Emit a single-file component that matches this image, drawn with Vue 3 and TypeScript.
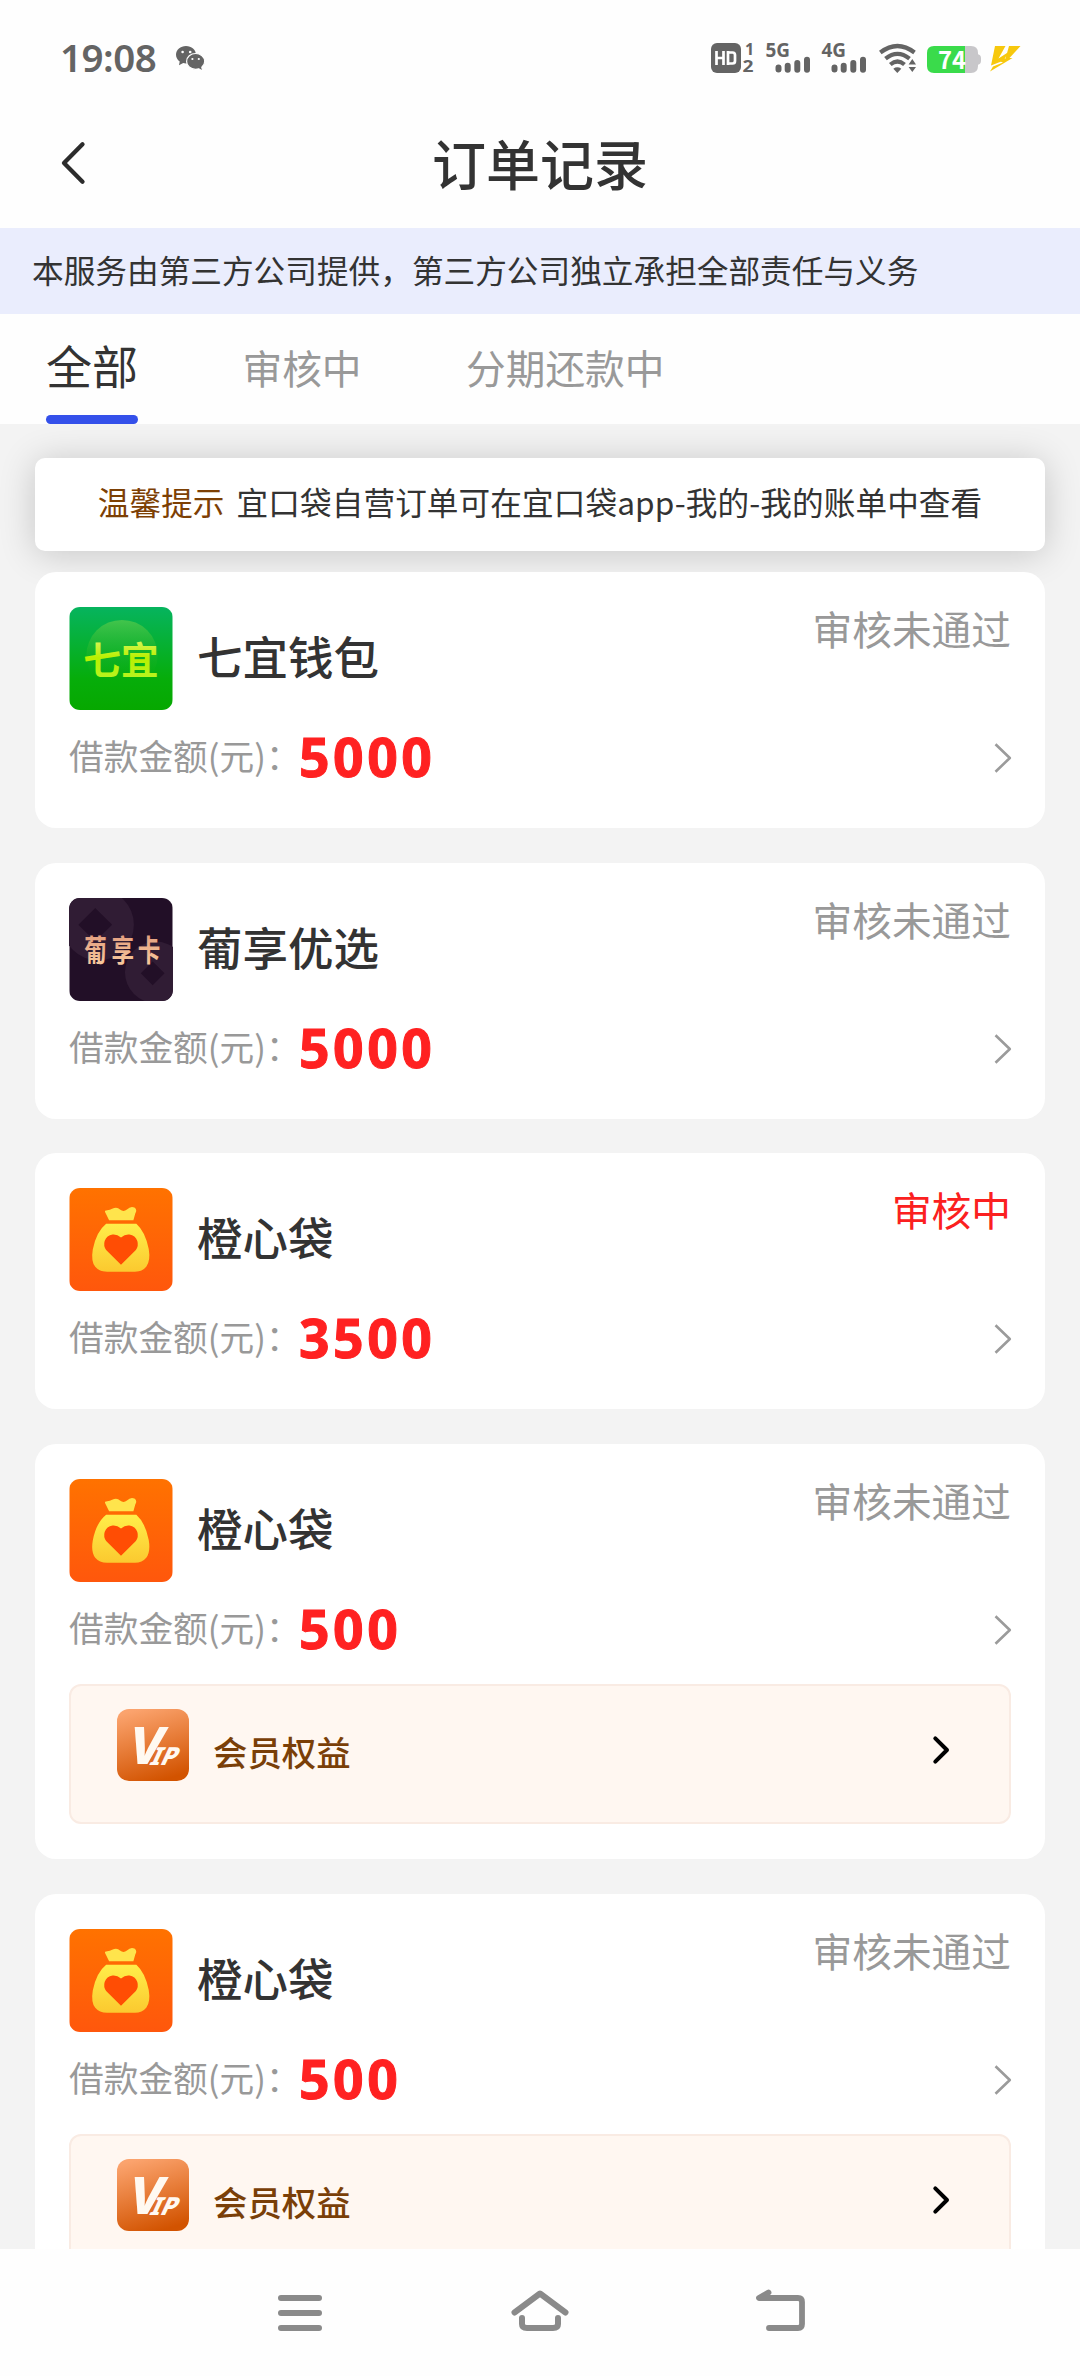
<script setup lang="ts">
type Logo = 'qiyi' | 'puxiang' | 'chengxin'

interface Order {
  id: number
  logo: Logo
  name: string
  amount: string
  status: string
  pending?: boolean
  vip?: boolean
}

const tabs = ['全部', '审核中', '分期还款中']
const active = 0

const orders: Order[] = [
  { id: 1, logo: 'qiyi', name: '七宜钱包', amount: '5000', status: '审核未通过' },
  { id: 2, logo: 'puxiang', name: '葡享优选', amount: '5000', status: '审核未通过' },
  { id: 3, logo: 'chengxin', name: '橙心袋', amount: '3500', status: '审核中', pending: true },
  { id: 4, logo: 'chengxin', name: '橙心袋', amount: '500', status: '审核未通过', vip: true },
  { id: 5, logo: 'chengxin', name: '橙心袋', amount: '500', status: '审核未通过', vip: true },
]
</script>

<template>
  <div class="screen">
    <div class="statusbar">
      <span class="clock">19:08</span>
      <svg class="wechat" width="30" height="26" viewBox="0 0 30 26">
        <path fill="#646464" d="M10 0C4.500 0 0 3.800 0 8.700c0 2.800 1.500 5.200 3.700 6.800L3 19.300l4.200-2.200c.9.2 1.800.3 2.800.3 5.500 0 10-3.900 10-8.700S15.500 0 10 0Z" />
        <path fill="#646464" stroke="#fff" stroke-width="1.200" d="M19.600 7.500c-5 0-9 3.500-9 7.900s4 7.900 9 7.900c1.200 0 2.300-.2 3.300-.5l3.800 2.400-.9-4c1.800-1.500 2.900-3.500 2.900-5.800 0-4.400-4.100-7.900-9.100-7.900Z" />
        <g fill="#fff"><circle cx="6.600" cy="6" r="1.300" /><circle cx="14.200" cy="6" r="1.300" /><circle cx="16.400" cy="13" r="1.100" /><circle cx="22.800" cy="13" r="1.100" /></g>
      </svg>
      <div class="indicators">
        <svg width="42" height="30" viewBox="0 0 42 30">
          <rect width="30" height="30" rx="6" fill="#646464" />
          <path d="M5.500 8v14M12.500 8v14M5.500 15h7M17 9.500h4.500q2.500 0 2.500 2.500v6q0 2.500-2.500 2.500H17ZM17 8v14" fill="none" stroke="#fff" stroke-width="2.700" />
          <text class="tiny" x="34" y="12" font-size="16">1</text>
          <text class="tiny" x="31.500" y="29.300" font-size="16" textLength="11" lengthAdjust="spacingAndGlyphs">2</text>
        </svg>
        <svg v-for="g in ['5G', '4G']" :key="g" class="signal" width="44" height="30" viewBox="0 0 44 30">
          <text class="tiny" x="-.5" y="14" font-size="19" textLength="24.500" lengthAdjust="spacingAndGlyphs">{{ g }}</text>
          <path d="M12.500 24.500v2M21.700 22.700v4M31.300 20v6.700M41 16.800v9.900" fill="none" stroke="#646464" stroke-width="6" stroke-linecap="round" />
        </svg>
        <svg class="wifi" width="37" height="30" viewBox="0 0 37 30">
          <g fill="none" stroke="#646464" stroke-width="4.200">
            <path d="M1.300 9.500Q18.500-3.500 35.500 9.500" />
            <path d="M6.500 15.600Q18.500 6 30.500 15.600" />
            <path d="M11.300 21.500Q18.500 15.500 25.500 21.500" />
          </g>
          <path d="M14.300 25.700Q18.300 23 22.300 25.700L18.300 30Z" fill="#646464" />
          <path d="M33.300 16l3.700 5.400h-7.400ZM33.300 29l3.700-5h-7.400Z" fill="#646464" />
        </svg>
        <svg class="battery" width="54" height="27" viewBox="0 0 54 27">
          <path d="M38 0h6q7 0 7 7v13q0 7-7 7h-6Z" fill="#c8c7ca" />
          <path d="M50 8q4 .5 4 4v3q0 3.500-4 4Z" fill="#c8c7ca" />
          <path d="M7 0h31v27H7q-7 0-7-7V7q0-7 7-7Z" fill="#3adb4b" />
          <text x="11" y="22.500" font-size="24" font-weight="700" fill="#fff" textLength="28" lengthAdjust="spacingAndGlyphs">74</text>
        </svg>
        <svg class="bolt" width="30" height="26" viewBox="0 0 30 26">
          <path fill="#f7c80d" d="M5 0h10.500L8.500 12.500l10-6.500L14.500 13l4.500-.5L1 19.500ZM19 0H30.500L19.500 12h3L0 25.500l3-5 10-4-4-1.500 6.500-2.500Z" />
        </svg>
      </div>
    </div>

    <header class="header">
      <svg class="back" width="24" height="42" viewBox="0 0 24 42">
        <path d="M21.500 2.300 3 21l18.500 18.700" fill="none" stroke="#2c2c2c" stroke-width="4.300" stroke-linecap="round" stroke-linejoin="round" />
      </svg>
      <h1>订单记录</h1>
    </header>

    <div class="notice">本服务由第三方公司提供，第三方公司独立承担全部责任与义务</div>

    <nav class="tabs">
      <span v-for="(t, i) in tabs" :key="t" class="tab" :class="{ active: i === active }">{{ t }}</span>
    </nav>

    <main class="list">
      <div class="tip"><b>温馨提示</b><span>宜口袋自营订单可在宜口袋app-我的-我的账单中查看</span></div>

      <section v-for="o in orders" :key="o.id" class="card">
        <div class="head">
          <svg v-if="o.logo === 'qiyi'" class="logo" viewBox="0 0 104 104">
            <defs>
              <linearGradient id="qy-bg" x1="0" y1="0" x2="0" y2="1"><stop offset="0" stop-color="#06b45e" /><stop offset=".7" stop-color="#06ad0a" /><stop offset="1" stop-color="#06a800" /></linearGradient>
              <linearGradient id="qy-disc" x1="0" y1="0" x2="0" y2="1"><stop offset="0" stop-color="#43c44c" /><stop offset=".85" stop-color="#0cab10" stop-opacity="0" /></linearGradient>
              <linearGradient id="qy-text" x1="0" y1="0" x2="0" y2="1"><stop offset="0" stop-color="#eaf78a" /><stop offset=".5" stop-color="#b9f000" /><stop offset="1" stop-color="#b6f52a" /></linearGradient>
            </defs>
            <rect width="104" height="104" fill="url(#qy-bg)" />
            <circle cx="53" cy="49" r="36" fill="url(#qy-disc)" />
            <text x="14" y="68" font-size="38" font-weight="700" fill="url(#qy-text)" textLength="76">七宜</text>
          </svg>
          <svg v-else-if="o.logo === 'puxiang'" class="logo" viewBox="0 0 104 104">
            <defs>
              <linearGradient id="px-text" x1="0" y1="0" x2="0" y2="1"><stop offset="0" stop-color="#dd9378" /><stop offset="1" stop-color="#fbd0a2" /></linearGradient>
            </defs>
            <rect width="104" height="104" fill="#220f27" />
            <circle cx="29" cy="27" r="36" fill="#301c34" />
            <circle cx="87" cy="75" r="31" fill="#301c34" />
            <path d="M26 10 43 27 26 44 9 27ZM84 64 96 76 84 88 72 76Z" fill="#220f27" />
            <text transform="translate(15 63.500) scale(.76 1)" x="0 36 71" y="0" font-size="30" font-weight="700" fill="url(#px-text)">葡享卡</text>
          </svg>
          <svg v-else class="logo" viewBox="0 0 104 104">
            <defs>
              <linearGradient id="cx-bg" x1="0" y1="0" x2="0" y2="1"><stop offset="0" stop-color="#ff7200" /><stop offset="1" stop-color="#ff570c" /></linearGradient>
              <linearGradient id="cx-bag" x1="0" y1="0" x2="0" y2="1"><stop offset="0" stop-color="#ffee4a" /><stop offset="1" stop-color="#fbc92f" /></linearGradient>
            </defs>
            <rect width="104" height="104" fill="url(#cx-bg)" />
            <path d="M40 32.500 36 24.500q-1-2 2-2 3 0 5-1.500 5-2.500 8 .800 3.500 3 7 0 4-4.300 8-1.800 2.500 2.300.5 5.500L64.500 32.500Z" fill="#ffe44c" />
            <path d="M37 36h30.500q9 8 12.500 25.500 2 12-2.500 18Q73.500 84.500 66 84.500H38q-8 0-12-5Q21.500 74 23.500 62 27 44 37 36Z" fill="url(#cx-bag)" />
            <path d="M52 50Q48 46.500 43.500 47q-6 .7-8 6.500-1.500 5 1.500 9L52 77.500 67 62.500q3-4 1.500-9-2-5.800-8-6.500Q56 46.500 52 50Z" fill="#ff4d04" />
          </svg>
          <span class="name">{{ o.name }}</span>
          <span class="status" :class="{ pending: o.pending }">{{ o.status }}</span>
        </div>
        <div class="money">
          <span class="label">借款金额(元)：</span>
          <span class="amount">{{ o.amount }}</span>
          <svg class="go" width="18" height="30" viewBox="0 0 18 30">
            <path d="M1.500 1.200 15.800 15 1.500 28.800" fill="none" stroke="#9b9b9b" stroke-width="2.600" stroke-linejoin="round" />
          </svg>
        </div>
        <div v-if="o.vip" class="vip">
          <svg class="badge" width="72" height="72" viewBox="0 0 72 72">
            <defs>
              <linearGradient id="vip-bg" x1=".3" y1="0" x2=".6" y2="1"><stop offset="0" stop-color="#fba36d" /><stop offset="1" stop-color="#d25300" /></linearGradient>
            </defs>
            <rect width="72" height="72" rx="12" fill="url(#vip-bg)" />
            <text class="vip-v" transform="translate(8.500 55) skewX(-14)" font-size="52" textLength="34" lengthAdjust="spacingAndGlyphs">V</text>
            <text class="vip-v" transform="translate(31.500 55.500) skewX(-25)" font-size="25" textLength="26" lengthAdjust="spacingAndGlyphs">IP</text>
          </svg>
          <span class="vip-name">会员权益</span>
          <svg class="vip-go" width="17" height="28" viewBox="0 0 17 28">
            <path d="M2.300 2.300 14 14 2.300 25.700" fill="none" stroke="#000" stroke-width="4" stroke-linecap="round" stroke-linejoin="round" />
          </svg>
        </div>
      </section>
    </main>

    <footer class="sysnav">
      <svg width="46" height="44" viewBox="0 0 46 44">
        <path d="M4 7h38M4 22h38M4 37h38" stroke="#8a8a8a" stroke-width="6" stroke-linecap="round" />
      </svg>
      <svg width="58" height="44" viewBox="0 0 58 44">
        <path d="M3.500 21.500 29 2.500 54.500 21.500M11 27v6q0 4 5 4h26q5 0 5-4v-6" fill="none" stroke="#8a8a8a" stroke-width="6" stroke-linecap="round" stroke-linejoin="round" />
      </svg>
      <svg width="50" height="44" viewBox="0 0 50 44">
        <path d="M12.500 1.500 3 7h39q4 0 4 4V33q0 4-4 4H13" fill="none" stroke="#8a8a8a" stroke-width="5.800" stroke-linecap="round" stroke-linejoin="round" />
      </svg>
    </footer>
  </div>
</template>

<style>
body {
  margin: 0;
  background: #fff;
}
</style>

<style scoped>
.screen {
  width: 1080px;
  height: 2376px;
  display: flex;
  flex-direction: column;
  overflow: hidden;
  background: #fefefe;
  color: #333;
  font-family: 'Noto Sans CJK SC', 'Noto Sans', sans-serif;
}

svg {
  display: block;
  flex: none;
  overflow: visible;
}

.statusbar {
  flex: none;
  height: 98px;
  display: flex;
  align-items: flex-start;
  padding: 0 60px 0 60px;
}

.clock {
  width: 116px;
  margin-top: 37px;
  font: 600 38.500px/40px 'Noto Sans', sans-serif;
  letter-spacing: -0.500px;
  color: #646464;
}

.wechat {
  margin-top: 46px;
}

.indicators {
  margin: 43px 0 0 auto;
  display: flex;
}

.tiny {
  fill: #646464;
  font-family: 'Noto Sans', sans-serif;
  font-weight: 700;
}

.signal {
  margin-left: 12.500px;
}

.wifi {
  margin-left: 13px;
}

.battery {
  margin: 3px 0 0 11px;
}

.bolt {
  margin: 3px 0 0 9px;
}

.header {
  flex: none;
  height: 130px;
  display: grid;
  grid-template-columns: 120px 1fr 120px;
  align-items: center;
}

.back {
  margin-left: 61px;
}

h1 {
  margin: 0;
  text-align: center;
  font-size: 54px;
  line-height: 60px;
  font-weight: 500;
}

.notice {
  flex: none;
  box-sizing: border-box;
  height: 86px;
  padding-left: 32px;
  background: #eaedfd;
  font-size: 31.660px;
  line-height: 83px;
  white-space: nowrap;
}

.tabs {
  flex: none;
  height: 110px;
  display: flex;
  gap: 104.500px;
  padding-left: 46px;
}

.tab {
  height: 110px;
  font-size: 39.700px;
  line-height: 105px;
  color: #999;
}

.tab.active {
  display: flex;
  flex-direction: column;
  font-size: 46px;
  line-height: 101px;
  color: #333;
}

.tab.active::after {
  content: '';
  height: 9px;
  border-radius: 4.500px;
  background: #3450ea;
}

.list {
  flex: 1;
  min-height: 0;
  overflow: hidden;
  display: flex;
  flex-direction: column;
  padding: 34px 35px 0;
  background: #f3f3f3;
}

.tip {
  flex: none;
  height: 93px;
  margin-bottom: 21px;
  display: flex;
  justify-content: center;
  gap: 12px;
  border-radius: 10px;
  background: #fff;
  box-shadow: 0 3px 36px rgba(0, 0, 0, 0.19);
  font-size: 31.600px;
  letter-spacing: 0.120px;
  line-height: 87px;
  white-space: nowrap;
}

.tip b {
  font-weight: 400;
  color: #7d4004;
}

.card {
  position: relative;
  flex: none;
  margin-bottom: 34.700px;
  padding: 35px 34px 24px;
  border-radius: 21px;
  background: #fff;
}

.head {
  display: flex;
  height: 103px;
}

.logo {
  width: 104px;
  height: 103px;
  border-radius: 11px;
  overflow: hidden;
}

.name {
  margin-left: 24px;
  font-size: 45.500px;
  line-height: 96px;
  font-weight: 500;
}

.status {
  margin-left: auto;
  font-size: 39.700px;
  line-height: 42px;
  color: #999;
}

.status.pending {
  color: #fb2020;
}

.money {
  height: 94px;
  display: flex;
  align-items: center;
}

.label {
  flex: none;
  width: 230px;
  height: 94px;
  font-size: 34.700px;
  line-height: 91px;
  white-space: nowrap;
  color: #999;
}

.amount {
  font-size: 53.500px;
  line-height: 94px;
  font-weight: 700;
  font-family: 'Noto Sans', sans-serif;
  letter-spacing: 3.500px;
  color: #ff2121;
  -webkit-text-stroke: 1px #ff2121;
}

.go {
  margin: 2px -1px 0 auto;
}

.vip {
  box-sizing: border-box;
  height: 140px;
  margin: 8px 0 11px;
  padding: 23px 59px 0 46px;
  display: flex;
  border: 2px solid #f9ebe3;
  border-radius: 12px;
  background: #fff7f1;
}

.vip-name {
  margin-left: 24px;
  font-size: 34.400px;
  line-height: 84px;
  font-weight: 500;
  color: #7a3f08;
}

.vip-v {
  fill: #fff9f1;
  font-family: 'Noto Sans', sans-serif;
  font-weight: 800;
}

.vip-go {
  margin: 27px 0 0 auto;
}

.sysnav {
  flex: none;
  height: 127px;
  display: flex;
  gap: 187.500px;
  padding: 42px 0 0 277px;
  box-sizing: border-box;
  background: #fefefe;
}
</style>
